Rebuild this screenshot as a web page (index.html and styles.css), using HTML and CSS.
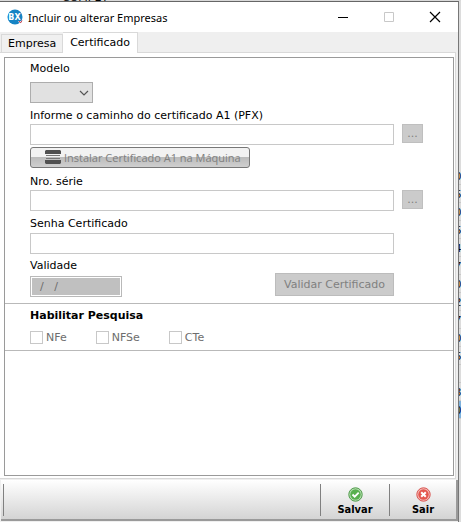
FILE: index.html
```html
<!DOCTYPE html>
<html lang="pt-BR">
<head>
  <meta charset="UTF-8">
  <title>Incluir ou alterar Empresas</title>
  <link rel="stylesheet" href="styles.css">
</head>
<body>

  <!-- Grid of the main screen, behind the window -->
  <div class="back-header"><span>COMPET</span></div>

  <div class="desktop">
    <main class="window">
      <header class="title-bar">
        <svg class="app-icon" width="16" height="16" viewBox="0 0 16 16">
          <circle cx="8" cy="8" r="7.5" fill="#1684c4"/>
          <text x="7.5" y="10.5" text-anchor="middle" class="app-icon-text">BX</text>
          <path d="M11 12l2 3 2-3z" fill="#e8eef5"/>
          <path d="M12 12l1.500 2 1.500-2.500" fill="none" stroke="#c33b4a"/>
        </svg>
        <h1>Incluir ou alterar Empresas</h1>
        <button class="win-button" aria-label="Minimizar">
          <svg width="12" height="12" viewBox="0 0 12 12"><path d="M1 6.500h10" stroke="#000"/></svg>
        </button>
        <button class="win-button" aria-label="Maximizar" disabled>
          <svg width="12" height="12" viewBox="0 0 12 12"><path d="M1.500 1.500h9v9h-9z" fill="none" stroke="#c8c8c8"/></svg>
        </button>
        <button class="win-button" aria-label="Fechar">
          <svg width="12" height="12" viewBox="0 0 12 12"><path d="M1 1l10 10M11 1L1 11" stroke="#000" stroke-width="1.200"/></svg>
        </button>
      </header>

      <nav class="tabs">
        <button class="tab">Empresa</button>
        <button class="tab active">Certificado</button>
      </nav>

      <div class="tab-page">
        <form class="panel">
          <section class="section fields">
            <label class="label-modelo" for="modelo">Modelo</label>
            <div class="select-box">
              <select id="modelo"><option></option></select>
              <svg class="arrow" width="10" height="6" viewBox="0 0 10 6"><path d="M1 1l4 4 4-4" fill="none" stroke="#555" stroke-width="1.200"/></svg>
            </div>

            <label for="caminho">Informe o caminho do certificado A1 (PFX)</label>
            <div class="field-row">
              <input type="text" id="caminho">
              <button type="button" class="browse" disabled>...</button>
            </div>
            <button type="button" class="install" disabled>
              <svg width="16" height="14" viewBox="0 0 16 14">
                <path d="M1 0h14l1 1v3H0V1z" fill="#505050"/>
                <path d="M1 5.500h14M1 8.500h14" stroke="#777"/>
                <path d="M0 10h16v3l-1 1H1l-1-1z" fill="#505050"/>
              </svg>
              Instalar Certificado A1 na Máquina
            </button>

            <label for="serie">Nro. série</label>
            <div class="field-row">
              <input type="text" id="serie">
              <button type="button" class="browse" disabled>...</button>
            </div>

            <label class="label-senha" for="senha">Senha Certificado</label>
            <div class="field-row senha">
              <input type="password" id="senha">
            </div>

            <div class="validity">
              <div class="validity-date">
                <label for="validade">Validade</label>
                <input type="text" id="validade" class="date" value="  /   /" disabled>
              </div>
              <button type="button" class="validate" disabled>Validar Certificado</button>
            </div>
          </section>

          <section class="section search">
            <h2>Habilitar Pesquisa</h2>
            <div class="checks">
              <label><input type="checkbox" disabled>NFe</label>
              <label><input type="checkbox" disabled>NFSe</label>
              <label><input type="checkbox" disabled>CTe</label>
            </div>
          </section>
        </form>
      </div>

      <footer class="toolbar">
        <button class="tool">
          <svg width="15" height="15" viewBox="0 0 15 15">
            <circle cx="7.500" cy="7.500" r="6.700" fill="#b9deb4" stroke="#4c9b47"/>
            <circle cx="7.500" cy="7.500" r="5.200" fill="#59b04f"/>
            <path d="M4.500 7.500l2.200 2.200 4-4" fill="none" stroke="#fff" stroke-width="1.800"/>
          </svg>
          Salvar
        </button>
        <button class="tool tool-exit">
          <svg width="15" height="15" viewBox="0 0 15 15">
            <circle cx="7.500" cy="7.500" r="6.700" fill="#f5bcb8" stroke="#d9534f"/>
            <circle cx="7.500" cy="7.500" r="5.200" fill="#e4574f"/>
            <path d="M5.200 5.200l4.600 4.600M9.800 5.200L5.200 9.800" stroke="#fff" stroke-width="2"/>
          </svg>
          Sair
        </button>
      </footer>
    </main>

    <div class="back-grid">
      <div>0</div><div>5</div><div>0</div><div>5</div><div>4</div><div>7</div><div>0</div><div>2</div><div>7</div><div>0</div><div>5</div><div></div><div>3</div><div class="selected">0</div>
    </div>
  </div>

</body>
</html>
```
FILE: styles.css
```css
* {
  box-sizing: border-box;
}

body {
  margin: 0;
  height: 100vh;
  overflow: hidden;
  display: flex;
  flex-direction: column;
  background-color: #d9d9d9;
  font-family: "DejaVu Sans", Verdana, sans-serif;
  font-size: 11px;
  color: #000;
}

button, input, select {
  font: inherit;
  margin: 0;
  padding: 0;
}

h1, h2 {
  margin: 0;
}

svg {
  flex: none;
}

/* Background screen */

.back-header {
  flex: none;
  display: flex;
  align-items: flex-end;
  height: 1px;
  padding-left: 62px;
  overflow: hidden;
  line-height: 6px;
}

.desktop {
  flex: 1;
  display: flex;
  min-height: 0;
}

.back-grid {
  width: 2px;
  padding-top: 166px;
  overflow: hidden;
  background-color: #dcdcdc;
  font-family: "Liberation Sans", Arial, sans-serif;
}

.back-grid div {
  display: flex;
  justify-content: flex-end;
  height: 18px;
  line-height: 18px;
  border-bottom: 1px solid #c8c8c8;
}

.back-grid .selected {
  background-color: #7fb2dc;
}

/* Window */

.window {
  flex: 1;
  display: flex;
  flex-direction: column;
  min-width: 0;
  background-color: #efefef;
  border-top: 1px solid #666;
  border-right: 1px solid #777;
}

.title-bar {
  flex: none;
  display: flex;
  align-items: center;
  height: 30px;
  padding-left: 7px;
  background-color: #fff;
}

.title-bar h1 {
  flex: 1;
  padding-left: 5px;
  font-family: "Noto Sans", "Segoe UI", sans-serif;
  font-size: 11px;
  font-weight: normal;
}

.app-icon-text {
  font-family: "DejaVu Sans", sans-serif;
  font-size: 8px;
  font-weight: bold;
  fill: #fff;
}

.win-button {
  display: flex;
  align-items: center;
  justify-content: center;
  width: 46px;
  height: 30px;
  border: none;
  background: none;
}

.tabs {
  flex: none;
  display: flex;
  align-items: flex-end;
  height: 20px;
  padding-left: 1px;
}

.tab {
  height: 18px;
  padding: 0 6px;
  border: 1px solid #d9d9d9;
  border-bottom: none;
  background-color: #f0f0f0;
  color: #000;
}

.tab.active {
  height: 21px;
  margin-bottom: -1px;
  padding: 0 7px 2px;
  border-left: none;
  background-color: #fff;
  z-index: 1;
}

.tab-page {
  flex: 1;
  display: flex;
  margin-right: 2px;
  padding: 4px 1px 2px 4px;
  background-color: #fff;
  border: 1px solid #d9d9d9;
  border-left: none;
}

.panel {
  flex: 1;
  min-width: 0;
  border: 1px solid #9a9a9a;
}

.section {
  border-bottom: 1px solid #b9b9b9;
}

.fields {
  display: flex;
  flex-direction: column;
  padding: 1px 30px 6px 25px;
}

.fields label {
  padding-top: 2px;
  line-height: 16px;
}

.fields .label-modelo {
  margin-bottom: 5px;
}

.select-box {
  position: relative;
  width: 63px;
  height: 21px;
  margin-bottom: 3px;
}

.select-box select {
  display: block;
  width: 100%;
  height: 100%;
  appearance: none;
  border: 1px solid #adadad;
  border-radius: 0;
  background-color: #e1e1e1;
}

.select-box .arrow {
  position: absolute;
  right: 4px;
  top: 8px;
  pointer-events: none;
}

.field-row {
  display: flex;
  gap: 8px;
}

.field-row input {
  flex: 1;
  min-width: 0;
  height: 21px;
  padding: 0 4px;
  border: 1px solid #c8c8c8;
  background-color: #fff;
}

.browse {
  width: 21px;
  height: 19px;
  border: 1px solid #bfbfbf;
  background-color: #cbcbcb;
  color: #808080;
}

.install {
  display: flex;
  align-items: center;
  align-self: flex-start;
  gap: 3px;
  width: 220px;
  height: 21px;
  margin: 2px 0 4px;
  padding: 0 0 1px 14px;
  border: 1px solid #777;
  border-radius: 3px;
  background: linear-gradient(#f2f2f2 50%, #bcbcbc 50%, #cfcfcf);
  font-family: "Open Sans", "Segoe UI", sans-serif;
  color: #808080;
  white-space: nowrap;
}

.fields .label-senha {
  margin-top: 3px;
}

.senha {
  margin: 1px 29px 2px 0;
}

.validity {
  display: flex;
  align-items: flex-end;
  justify-content: space-between;
  margin-right: 29px;
}

.validity-date {
  display: flex;
  flex-direction: column;
  gap: 2px;
}

.date {
  width: 92px;
  height: 21px;
  padding: 0 2px;
  border: 1px solid #b9b9b9;
  background-color: #c0c0c0;
  box-shadow: inset 0 0 0 1px #fff;
  color: #6d6d6d;
  white-space: pre;
}

.validate {
  width: 119px;
  height: 23px;
  margin-bottom: 1px;
  border: 1px solid #bcbcbc;
  background-color: #cbcbcb;
  color: #808080;
}

.search {
  padding: 2px 25px 6px;
}

.search h2 {
  margin-bottom: 7px;
  padding-top: 2px;
  font-size: 11px;
  line-height: 16px;
}

.checks {
  display: flex;
  gap: 29px;
}

.checks label {
  display: flex;
  align-items: center;
  gap: 3px;
  height: 13px;
  color: #6d6d6d;
}

.checks input {
  appearance: none;
  width: 13px;
  height: 13px;
  border: 1px solid #c8c8c8;
  background-color: #fff;
}

/* Bottom buttons */

.toolbar {
  flex: none;
  display: flex;
  justify-content: flex-end;
  height: 41px;
  margin: 1px 0 1px 1px;
  padding: 4px 0 3px 2px;
  background: linear-gradient(#fff, #d4d4d4);
  border-right: 2px solid #9a9a9a;
  border-bottom: 2px solid #9a9a9a;
}

.toolbar::before {
  content: "";
  flex: 1;
  border-left: 1px solid #808080;
}

.tool {
  display: flex;
  flex-direction: column;
  align-items: center;
  justify-content: flex-end;
  gap: 1px;
  width: 69px;
  border: none;
  border-left: 1px solid #808080;
  background: none;
  font-family: "DejaVu Sans Condensed", Tahoma, sans-serif;
  font-weight: bold;
  color: #000;
}

.tool-exit {
  width: 67px;
}
```
